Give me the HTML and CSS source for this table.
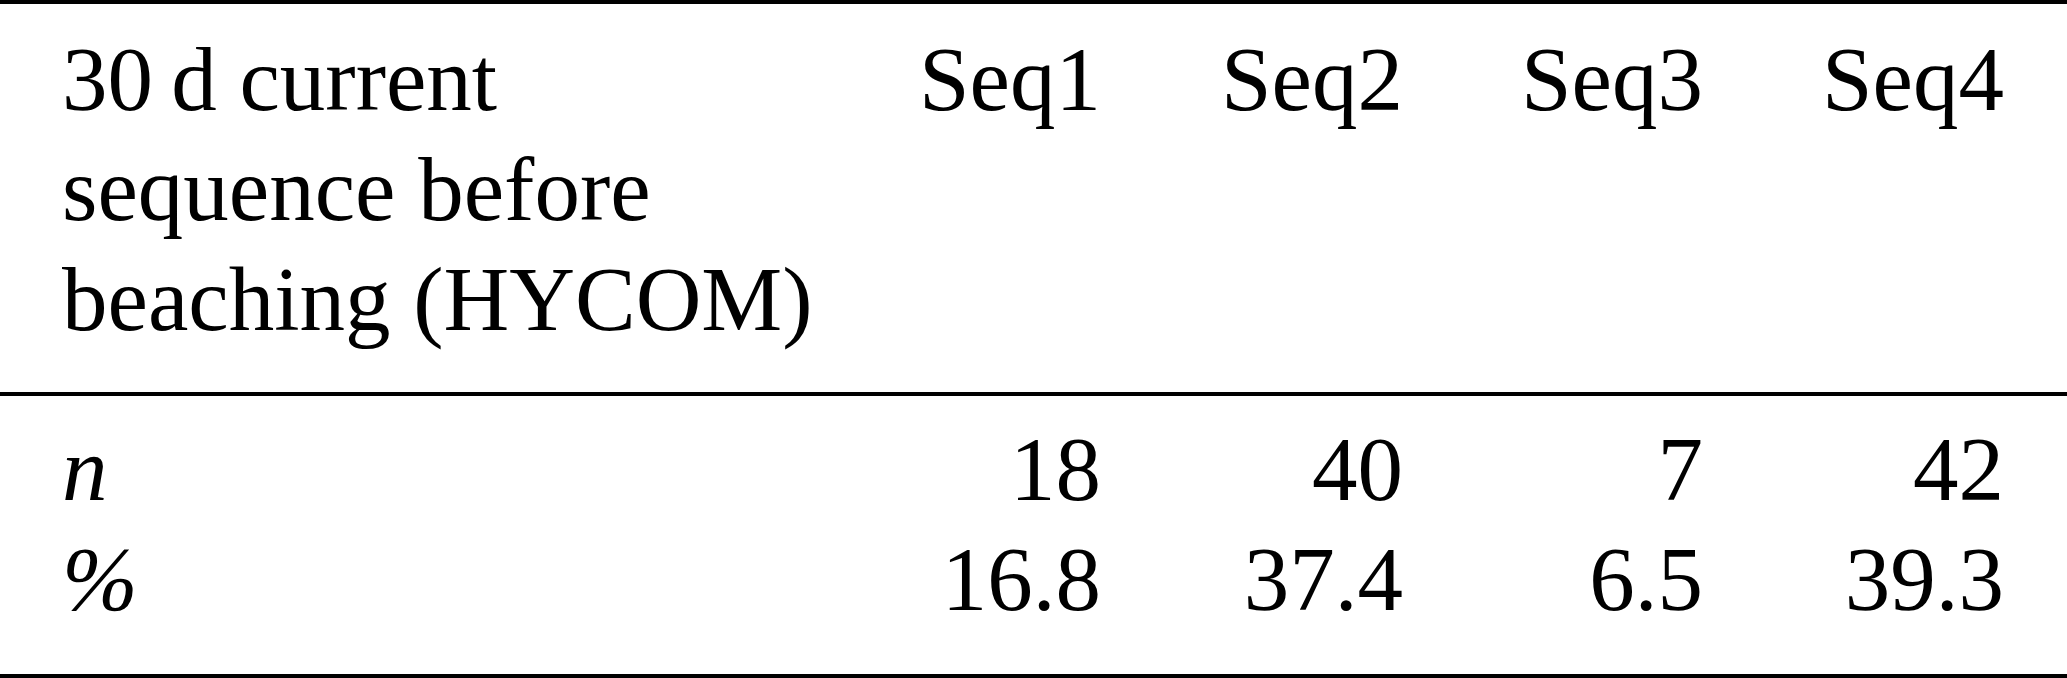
FILE: index.html
```html
<html lang="en">
<head>
    <meta charset="utf-8">
    <link rel="stylesheet" href="styles.css">
</head>
<body>
<table class="seq-table">
    <colgroup>
        <col class="col-label">
        <col class="col-a">
        <col class="col-b">
        <col class="col-c">
        <col class="col-d">
    </colgroup>
    <thead>
        <tr>
            <th class="label">30&thinsp;d current<br>sequence before<br>beaching (HYCOM)</th>
            <th class="num">Seq1</th>
            <th class="num">Seq2</th>
            <th class="num">Seq3</th>
            <th class="num last">Seq4</th>
        </tr>
    </thead>
    <tbody>
        <tr class="first">
            <td class="label"><i>n</i></td>
            <td class="num">18</td>
            <td class="num">40</td>
            <td class="num">7</td>
            <td class="num last">42</td>
        </tr>
        <tr class="end">
            <td class="label"><i>%</i></td>
            <td class="num">16.8</td>
            <td class="num">37.4</td>
            <td class="num">6.5</td>
            <td class="num last">39.3</td>
        </tr>
    </tbody>
</table>
</body>
</html>
```

FILE: styles.css
```css
* {
    margin: 0;
    padding: 0;
}
body {
    background: #fff;
    color: #000;
    font-family: "Liberation Serif", "Times New Roman", serif;
}
.seq-table {
    width: 2067px;
    table-layout: fixed;
    border-collapse: separate;
    border-spacing: 0;
    border-top: 4px solid #000;
    font-size: 91px;
    line-height: 110px;
}
.col-label { width: 799px; }
.col-a { width: 302px; }
.col-b { width: 302px; }
.col-c { width: 300px; }
.col-d { width: 364px; }
th, td {
    font-weight: normal;
    vertical-align: top;
    white-space: nowrap;
}
th {
    padding-top: 21px;
    padding-bottom: 37px;
    border-bottom: 4px solid #000;
}
.label {
    text-align: left;
    padding-left: 62px;
}
.num {
    text-align: right;
}
.last {
    padding-right: 63px;
}
tr.first td {
    padding-top: 19px;
}
tr.end td {
    padding-bottom: 39px;
    border-bottom: 4px solid #000;
}
```
